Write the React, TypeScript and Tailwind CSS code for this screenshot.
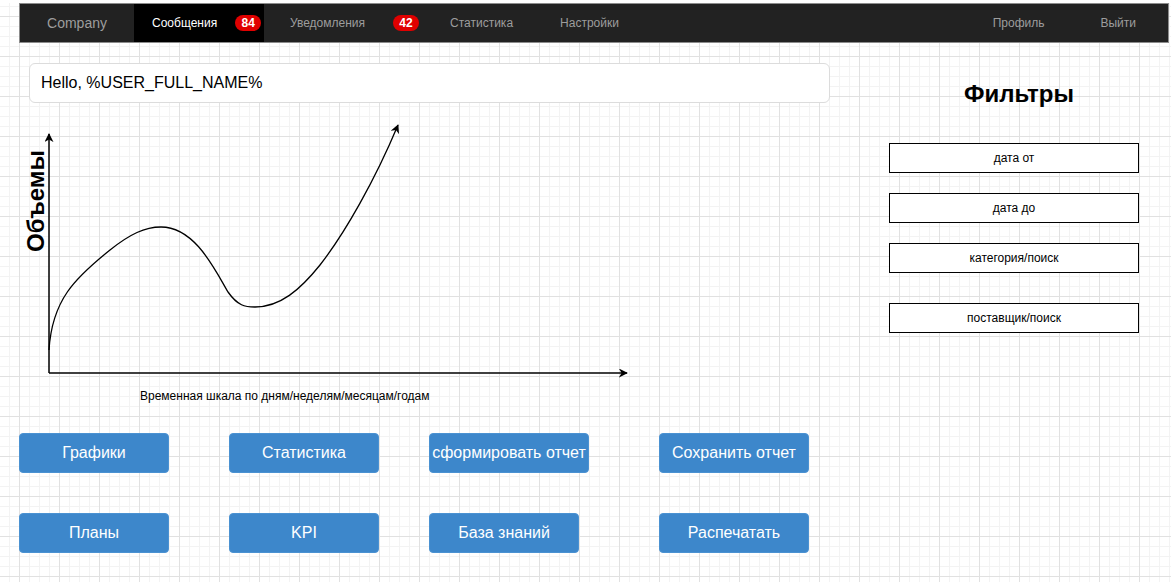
import React from 'react';

const gridBg =
  '[background-image:linear-gradient(to_right,#e1e1e1_1px,transparent_1px),linear-gradient(to_bottom,#e1e1e1_1px,transparent_1px),linear-gradient(to_right,#f3f3f3_1px,transparent_1px),linear-gradient(to_bottom,#f3f3f3_1px,transparent_1px)] [background-size:40px_40px,40px_40px,10px_10px,10px_10px] [background-position:19px_13px]';

function Badge({ children, className = '' }: { children: React.ReactNode; className?: string }) {
  return (
    <span
      className={`inline-flex h-[16px] w-[26px] items-center justify-center rounded-full bg-[#e00000] text-[12px] font-bold text-white ${className}`}
    >
      {children}
    </span>
  );
}

function Navbar() {
  return (
    <nav className="ml-[19px] mt-[3px] flex h-[40px] w-[1150px] items-center border border-[#8c8c8c] bg-[#222222] text-[12px] text-[#9d9d9d]">
      <div className="flex h-full w-[114px] items-center justify-center text-[14px]">Company</div>
      <div className="flex h-full w-[130px] items-center bg-black pl-[18px] text-white">
        <span>Сообщения</span>
        <Badge className="ml-[18px]">84</Badge>
      </div>
      <span className="ml-[26px]">Уведомления</span>
      <Badge className="ml-[28px]">42</Badge>
      <span className="ml-[31px]">Статистика</span>
      <span className="ml-[47px]">Настройки</span>
      <span className="ml-auto">Профиль</span>
      <span className="ml-[56px] pr-[32px]">Выйти</span>
    </nav>
  );
}

function Chart() {
  return (
    <svg width="621" height="282" viewBox="0 0 621 282" className="block -ml-[10px]">
      <defs>
        <marker
          id="arr"
          viewBox="0 0 10 10"
          refX="9"
          refY="5"
          markerWidth="9"
          markerHeight="9"
          markerUnits="userSpaceOnUse"
          orient="auto"
        >
          <path d="M0,0 L10,5 L0,10 L3,5 z" fill="#000" />
        </marker>
      </defs>
      <line x1="30" y1="270" x2="30" y2="31" stroke="#000" strokeWidth="1.5" markerEnd="url(#arr)" />
      <line x1="30" y1="270" x2="608" y2="270" stroke="#000" strokeWidth="1.5" markerEnd="url(#arr)" />
      <path
        d="M30,247 C33,197 56,175 91,147 C111,131 126,124 142,124 C176,124 196,167 209,189 C219,203 226,204 236,204 C261,204 281,187 301,162 C326,130 356,77 379,22"
        fill="none"
        stroke="#000"
        strokeWidth="1.3"
        markerEnd="url(#arr)"
      />
      <text
        x="16"
        y="98"
        transform="rotate(-90 16 98)"
        textAnchor="middle"
        dominantBaseline="central"
        fontFamily="'Liberation Sans', Arial, sans-serif"
        fontWeight="bold"
        fontSize="24"
        fill="#000"
      >
        Объемы
      </text>
    </svg>
  );
}

function Btn({ label, w = 'w-[150px]', className = '' }: { label: string; w?: string; className?: string }) {
  return (
    <button
      type="button"
      className={`flex h-[40px] ${w} items-center justify-center whitespace-nowrap rounded-[4px] border border-[#4b92d2] bg-[#3d87cb] text-[16px] text-white ${className}`}
    >
      {label}
    </button>
  );
}

function FilterBox({ label, className = '' }: { label: string; className?: string }) {
  return (
    <div
      className={`flex h-[30px] w-[250px] items-center justify-center border border-black bg-white text-[12px] text-black ${className}`}
    >
      {label}
    </div>
  );
}

export default function App() {
  return (
    <div className={`min-h-[582px] w-full bg-white font-['Liberation_Sans',Arial,sans-serif] ${gridBg}`}>
      <Navbar />
      <div className="flex">
        <div className="ml-[19px] w-[811px]">
          <div className="ml-[10px] mt-[20px] flex h-[40px] w-[801px] items-center rounded-[6px] border border-[#dcdcdc] bg-white pl-[11px] text-[16px] text-black">
            Hello, %USER_FULL_NAME%
          </div>
          <div className="ml-[10px]">
            <Chart />
          </div>
          <div className="ml-[121px] mt-[4px] text-[12px] leading-[14px] text-black">
            Временная шкала по дням/неделям/месяцам/годам
          </div>
          <div className="mt-[30px] flex">
            <Btn label="Графики" />
            <Btn label="Статистика" className="ml-[60px]" />
            <Btn label="сформировать отчет" w="w-[160px]" className="ml-[50px]" />
            <Btn label="Сохранить отчет" className="ml-[70px]" />
          </div>
          <div className="mt-[40px] flex">
            <Btn label="Планы" />
            <Btn label="KPI" className="ml-[60px]" />
            <Btn label="База знаний" className="ml-[50px]" />
            <Btn label="Распечатать" className="ml-[80px]" />
          </div>
        </div>
        <div className="ml-[59px] w-[250px]">
          <h2 className="mt-[38px] pl-[10px] text-center text-[24px] font-bold leading-[26px] text-black">Фильтры</h2>
          <FilterBox label="дата от" className="mt-[36px]" />
          <FilterBox label="дата до" className="mt-[20px]" />
          <FilterBox label="категория/поиск" className="mt-[20px]" />
          <FilterBox label="поставщик/поиск" className="mt-[30px]" />
        </div>
      </div>
    </div>
  );
}
